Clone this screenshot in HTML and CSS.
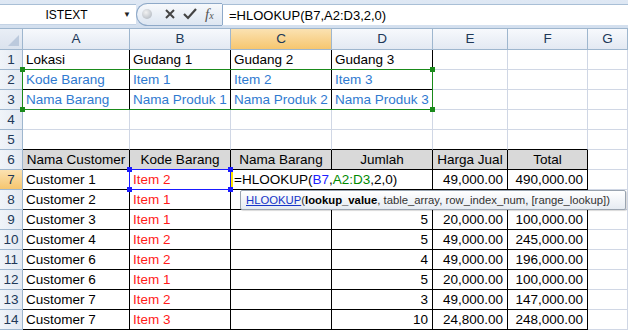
FILE: index.html
```html
<!DOCTYPE html>
<html lang="id">
<head>
    <meta charset="UTF-8">
    <title>HLOOKUP</title>
    <link rel="stylesheet" href="styles.css">
</head>
<body>
    <div class="formulabar">
        <div class="namebox">
            <span class="namebox-text">ISTEXT</span>
            <span class="namebox-arrow">&#9660;</span>
        </div>
        <div class="fxbuttons">
            <span class="dot"></span>
            <svg class="btn-icon" width="14" height="14" viewBox="0 0 14 14">
                <path d="M3 3 L11 11 M11 3 L3 11" stroke="#444" stroke-width="2" fill="none"/>
            </svg>
            <svg class="btn-icon" width="16" height="14" viewBox="0 0 16 14">
                <path d="M2 7 L6 11 L14 2" stroke="#444" stroke-width="2.2" fill="none"/>
            </svg>
            <span class="fx"><i>f</i><small>x</small></span>
        </div>
        <div class="formula">=HLOOKUP(B7,A2:D3,2,0)</div>
    </div>

    <div class="sheet">
        <div class="row headrow">
            <div class="corner"><span class="tri"></span></div>
            <div class="colhead">A</div>
            <div class="colhead">B</div>
            <div class="colhead active">C</div>
            <div class="colhead">D</div>
            <div class="colhead">E</div>
            <div class="colhead">F</div>
            <div class="colhead">G</div>
        </div>

        <div class="row">
            <div class="rowhead">1</div>
            <div class="cell b">Lokasi</div>
            <div class="cell b">Gudang 1</div>
            <div class="cell b">Gudang 2</div>
            <div class="cell b">Gudang 3</div>
            <div class="cell"></div><div class="cell"></div><div class="cell"></div>
        </div>
        <div class="row">
            <div class="rowhead">2</div>
            <div class="cell b blue">Kode Barang</div>
            <div class="cell b blue">Item 1</div>
            <div class="cell b blue">Item 2</div>
            <div class="cell b blue">Item 3</div>
            <div class="cell"></div><div class="cell"></div><div class="cell"></div>
        </div>
        <div class="row">
            <div class="rowhead">3</div>
            <div class="cell b blue">Nama Barang</div>
            <div class="cell b blue">Nama Produk 1</div>
            <div class="cell b blue">Nama Produk 2</div>
            <div class="cell b blue">Nama Produk 3</div>
            <div class="cell"></div><div class="cell"></div><div class="cell"></div>
        </div>
        <div class="row">
            <div class="rowhead">4</div>
            <div class="cell"></div><div class="cell"></div><div class="cell"></div><div class="cell"></div>
            <div class="cell"></div><div class="cell"></div><div class="cell"></div>
        </div>
        <div class="row">
            <div class="rowhead">5</div>
            <div class="cell bb"></div><div class="cell bb"></div><div class="cell bb"></div><div class="cell bb"></div>
            <div class="cell bb"></div><div class="cell bb"></div><div class="cell"></div>
        </div>
        <div class="row">
            <div class="rowhead">6</div>
            <div class="cell b th">Nama Customer</div>
            <div class="cell b th">Kode Barang</div>
            <div class="cell b th">Nama Barang</div>
            <div class="cell b th">Jumlah</div>
            <div class="cell b th">Harga Jual</div>
            <div class="cell b th">Total</div>
            <div class="cell"></div>
        </div>
        <div class="row">
            <div class="rowhead active">7</div>
            <div class="cell b">Customer 1</div>
            <div class="cell b red">Item 2</div>
            <div class="cell b editor">=HLOOKUP(<span class="ref-b">B7</span>,<span class="ref-g">A2:D3</span>,2,0)</div>
            <div class="cell b num">49,000.00</div>
            <div class="cell b num">490,000.00</div>
            <div class="cell"></div>
        </div>
        <div class="row">
            <div class="rowhead">8</div>
            <div class="cell b">Customer 2</div>
            <div class="cell b red">Item 1</div>
            <div class="cell b"></div><div class="cell b"></div><div class="cell b"></div><div class="cell b"></div>
            <div class="cell"></div>
        </div>
        <div class="row">
            <div class="rowhead">9</div>
            <div class="cell b">Customer 3</div>
            <div class="cell b red">Item 1</div>
            <div class="cell b"></div>
            <div class="cell b num">5</div>
            <div class="cell b num">20,000.00</div>
            <div class="cell b num">100,000.00</div>
            <div class="cell"></div>
        </div>
        <div class="row">
            <div class="rowhead">10</div>
            <div class="cell b">Customer 4</div>
            <div class="cell b red">Item 2</div>
            <div class="cell b"></div>
            <div class="cell b num">5</div>
            <div class="cell b num">49,000.00</div>
            <div class="cell b num">245,000.00</div>
            <div class="cell"></div>
        </div>
        <div class="row">
            <div class="rowhead">11</div>
            <div class="cell b">Customer 6</div>
            <div class="cell b red">Item 2</div>
            <div class="cell b"></div>
            <div class="cell b num">4</div>
            <div class="cell b num">49,000.00</div>
            <div class="cell b num">196,000.00</div>
            <div class="cell"></div>
        </div>
        <div class="row">
            <div class="rowhead">12</div>
            <div class="cell b">Customer 6</div>
            <div class="cell b red">Item 1</div>
            <div class="cell b"></div>
            <div class="cell b num">5</div>
            <div class="cell b num">20,000.00</div>
            <div class="cell b num">100,000.00</div>
            <div class="cell"></div>
        </div>
        <div class="row">
            <div class="rowhead">13</div>
            <div class="cell b">Customer 7</div>
            <div class="cell b red">Item 2</div>
            <div class="cell b"></div>
            <div class="cell b num">3</div>
            <div class="cell b num">49,000.00</div>
            <div class="cell b num">147,000.00</div>
            <div class="cell"></div>
        </div>
        <div class="row">
            <div class="rowhead">14</div>
            <div class="cell b">Customer 7</div>
            <div class="cell b red">Item 3</div>
            <div class="cell b"></div>
            <div class="cell b num">10</div>
            <div class="cell b num">24,800.00</div>
            <div class="cell b num">248,000.00</div>
            <div class="cell"></div>
        </div>

        <!-- range highlights drawn over the grid -->
        <div class="range-green">
            <span class="h tl"></span><span class="h tr"></span>
            <span class="h bl"></span><span class="h br"></span>
        </div>
        <div class="range-blue">
            <span class="h tl"></span><span class="h tr"></span>
            <span class="h bl"></span><span class="h br"></span>
        </div>
        <div class="tooltip">
            <a class="fn">HLOOKUP</a>(<b>lookup_value</b>, table_array, row_index_num, [range_lookup])
        </div>
    </div>
</body>
</html>
```

FILE: styles.css
```css
body {
    margin: 0;
    width: 628px;
    height: 330px;
    overflow: hidden;
    background-color: #fff;
    font-family: "Liberation Sans", Arial, sans-serif;
    font-size: 13.5px;
    color: #000;
}

/* formula bar */
.formulabar {
    display: flex;
    align-items: center;
    height: 28px;
    border-bottom: 1px solid #9eb6ce;
    background: linear-gradient(#dfe8f4, #d3dfee);
    box-sizing: content-box;
}

.namebox {
    display: flex;
    align-items: center;
    width: 136px;
    height: 21px;
    margin-top: 1px;
    background-color: #fff;
    border-top: 1px solid #a9bfd6;
    border-bottom: 1px solid #c4d3e5;
    box-sizing: border-box;
}

.namebox-text {
    flex: 1;
    text-align: center;
    font-size: 12px;
    padding-left: 10px;
}

.namebox-arrow {
    font-size: 8px;
    width: 13px;
    color: #222;
}

.fxbuttons {
    display: flex;
    align-items: center;
    gap: 5px;
    width: 86px;
    height: 23px;
    padding-left: 5px;
    box-sizing: border-box;
    border: 1px solid #8ea9c8;
    border-right: none;
    border-radius: 12px 0 0 12px;
    background: linear-gradient(#f7f9fc, #dde6f1);
}

.dot {
    width: 10px;
    height: 10px;
    border-radius: 50%;
    background: radial-gradient(circle at 40% 35%, #f2f2f2, #a8b0ba);
    margin-right: 6px;
}

.fx {
    font-family: "Liberation Serif", serif;
    font-size: 15px;
    color: #555;
    margin-left: 2px;
}

.fx small {
    font-size: 10px;
    font-style: italic;
}

.formula {
    flex: 1;
    height: 21px;
    margin-top: 1px;
    padding-left: 6px;
    line-height: 21px;
    font-size: 13px;
    background-color: #fff;
    border-top: 1px solid #a9bfd6;
    border-left: 1px solid #8ea9c8;
    box-sizing: border-box;
}

/* grid */
.sheet {
    position: relative;
}

.row {
    display: grid;
    grid-template-columns: 23px 107px 101px 101px 101px 75px 80px 1fr;
    height: 20px;
}

.headrow {
    height: 21px;
}

.corner,
.colhead,
.rowhead {
    background: linear-gradient(#f7f9fc, #e3e9f2);
    border-right: 1px solid #9eb6ce;
    border-bottom: 1px solid #9eb6ce;
    box-sizing: border-box;
    color: #203858;
    text-align: center;
    font-size: 13.5px;
}

.corner {
    position: relative;
    background: linear-gradient(#e9eef6, #dbe3ee);
}

.tri {
    position: absolute;
    right: 3px;
    bottom: 3px;
    width: 0;
    height: 0;
    border-left: 11px solid transparent;
    border-bottom: 11px solid #bccadd;
}

.colhead {
    line-height: 20px;
}

.rowhead {
    line-height: 19px;
    background: linear-gradient(90deg, #f0f4f9, #e3e9f2);
}

.colhead.active,
.rowhead.active {
    background: linear-gradient(#fbe2b2, #f6c66f);
    color: #203858;
}

.cell {
    border-right: 1px solid #d0d7e5;
    border-bottom: 1px solid #d0d7e5;
    box-sizing: border-box;
    padding-left: 3px;
    line-height: 19px;
    white-space: nowrap;
    overflow: hidden;
}

.cell.b {
    border-right-color: #000;
    border-bottom-color: #000;
}

.cell.bb {
    border-bottom-color: #000;
}

.th {
    background-color: #d9d9d9;
    text-align: center;
    padding-left: 0;
}

.blue {
    color: #2f7ad0;
}

.red {
    color: #ff1a1a;
}

.num {
    text-align: right;
    padding-left: 0;
    padding-right: 4px;
}

.editor {
    grid-column: span 2;
    box-shadow: inset 2px 0 0 #ffe600;
    padding-left: 3px;
}

.ref-b {
    color: #2020ff;
}

.ref-g {
    color: #008a00;
}

/* overlays */
.range-green,
.range-blue {
    position: absolute;
    box-sizing: border-box;
    pointer-events: none;
}

.range-green {
    left: 22px;
    top: 40px;
    width: 411px;
    height: 41px;
    border: 1px solid #1a8a1a;
}

.range-blue {
    left: 129px;
    top: 140px;
    width: 102px;
    height: 21px;
    border: 1px solid #1a1aff;
}

.h {
    position: absolute;
    width: 5px;
    height: 5px;
}

.range-green .h {
    background-color: #1a8a1a;
}

.range-blue .h {
    background-color: #1a1aff;
}

.tl { left: -3px; top: -3px; }
.tr { right: -3px; top: -3px; }
.bl { left: -3px; bottom: -3px; }
.br { right: -3px; bottom: -3px; }

.tooltip {
    position: absolute;
    left: 240px;
    top: 161px;
    width: 386px;
    height: 20px;
    box-sizing: border-box;
    padding-left: 5px;
    border: 1px solid #9aa4b0;
    border-radius: 2px;
    background: linear-gradient(#ffffff, #e6ebf2);
    box-shadow: 1px 1px 1px rgba(0, 0, 0, 0.15);
    font-size: 11.3px;
    line-height: 18px;
    color: #333;
    white-space: nowrap;
}

.fn {
    color: #1535c8;
    text-decoration: underline;
}

.tooltip b {
    color: #000;
}
```
